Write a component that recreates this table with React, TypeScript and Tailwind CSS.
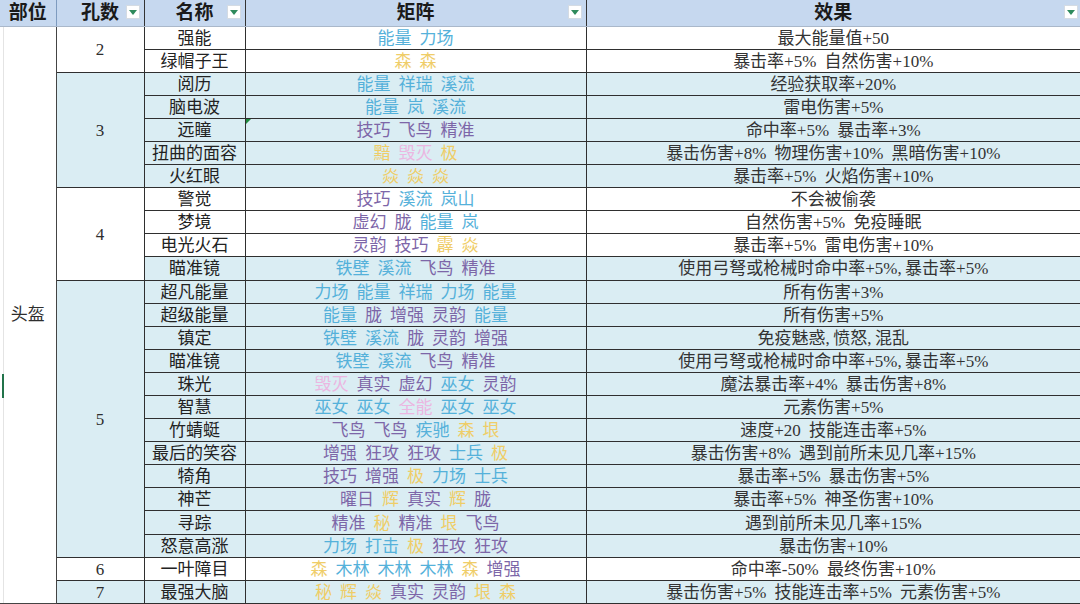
import React from "react";

const B = "text-[#55b1da]";
const P = "text-[#7d66a8]";
const Y = "text-[#efcd68]";
const K = "text-[#ebb6e1]";

const COLOR: Record<string, string> = {
  能量: B, 力场: B, 祥瑞: B, 溪流: B, 岚: B, 岚山: B, 铁壁: B, 巫女: B, 士兵: B, 打击: B, 疾驰: B, 木林: B,
  技巧: P, 飞鸟: P, 精准: P, 虚幻: P, 胧: P, 灵韵: P, 增强: P, 真实: P, 狂攻: P, 曜日: P,
  森: Y, 黯: Y, 极: Y, 焱: Y, 霹: Y, 垠: Y, 辉: Y, 秘: Y,
  毁灭: K, 全能: K,
};

type Row = { name: string; matrix: string; effect: string; blue?: boolean; mark?: boolean };
type Group = { count: string; blue: boolean; rows: Row[] };

const groups: Group[] = [
  {
    count: "2",
    blue: false,
    rows: [
      { name: "强能", matrix: "能量 力场", effect: "最大能量值+50" },
      { name: "绿帽子王", matrix: "森 森", effect: "暴击率+5% 自然伤害+10%" },
    ],
  },
  {
    count: "3",
    blue: true,
    rows: [
      { name: "阅历", matrix: "能量 祥瑞 溪流", effect: "经验获取率+20%" },
      { name: "脑电波", matrix: "能量 岚 溪流", effect: "雷电伤害+5%" },
      { name: "远瞳", matrix: "技巧 飞鸟 精准", effect: "命中率+5% 暴击率+3%", mark: true },
      { name: "扭曲的面容", matrix: "黯 毁灭 极", effect: "暴击伤害+8% 物理伤害+10% 黑暗伤害+10%" },
      { name: "火红眼", matrix: "焱 焱 焱", effect: "暴击率+5% 火焰伤害+10%" },
    ],
  },
  {
    count: "4",
    blue: false,
    rows: [
      { name: "警觉", matrix: "技巧 溪流 岚山", effect: "不会被偷袭" },
      { name: "梦境", matrix: "虚幻 胧 能量 岚", effect: "自然伤害+5% 免疫睡眠" },
      { name: "电光火石", matrix: "灵韵 技巧 霹 焱", effect: "暴击率+5% 雷电伤害+10%" },
      { name: "瞄准镜", matrix: "铁壁 溪流 飞鸟 精准", effect: "使用弓弩或枪械时命中率+5%,\u2009暴击率+5%", blue: true },
    ],
  },
  {
    count: "5",
    blue: true,
    rows: [
      { name: "超凡能量", matrix: "力场 能量 祥瑞 力场 能量", effect: "所有伤害+3%" },
      { name: "超级能量", matrix: "能量 胧 增强 灵韵 能量", effect: "所有伤害+5%" },
      { name: "镇定", matrix: "铁壁 溪流 胧 灵韵 增强", effect: "免疫魅惑,\u2009愤怒,\u2009混乱" },
      { name: "瞄准镜", matrix: "铁壁 溪流 飞鸟 精准", effect: "使用弓弩或枪械时命中率+5%,\u2009暴击率+5%" },
      { name: "珠光", matrix: "毁灭 真实 虚幻 巫女 灵韵", effect: "魔法暴击率+4% 暴击伤害+8%" },
      { name: "智慧", matrix: "巫女 巫女 全能 巫女 巫女", effect: "元素伤害+5%" },
      { name: "竹蜻蜓", matrix: "飞鸟 飞鸟 疾驰 森 垠", effect: "速度+20 技能连击率+5%" },
      { name: "最后的笑容", matrix: "增强 狂攻 狂攻 士兵 极", effect: "暴击伤害+8% 遇到前所未见几率+15%" },
      { name: "犄角", matrix: "技巧 增强 极 力场 士兵", effect: "暴击率+5% 暴击伤害+5%" },
      { name: "神芒", matrix: "曜日 辉 真实 辉 胧", effect: "暴击率+5% 神圣伤害+10%" },
      { name: "寻踪", matrix: "精准 秘 精准 垠 飞鸟", effect: "遇到前所未见几率+15%" },
      { name: "怒意高涨", matrix: "力场 打击 极 狂攻 狂攻", effect: "暴击伤害+10%" },
    ],
  },
  {
    count: "6",
    blue: false,
    rows: [{ name: "一叶障目", matrix: "森 木林 木林 木林 森 增强", effect: "命中率-50% 最终伤害+10%" }],
  },
  {
    count: "7",
    blue: true,
    rows: [{ name: "最强大脑", matrix: "秘 辉 焱 真实 灵韵 垠 森", effect: "暴击伤害+5% 技能连击率+5% 元素伤害+5%" }],
  },
];

function Filter({ edge }: { edge?: boolean }) {
  return (
    <span
      className={`absolute top-[5px] flex h-[14px] w-[14px] items-center justify-center border border-[#d4dbe3] bg-white ${
        edge ? "right-[2px]" : "right-[4px]"
      }`}
    >
      <span className="h-0 w-0 border-l-[4px] border-r-[4px] border-t-[5px] border-l-transparent border-r-transparent border-t-[#2e8a5c]" />
    </span>
  );
}

const cell = "border-b border-r border-[#2f2f2f] px-0 pt-[2px] pb-0 text-center align-middle";

export default function App() {
  const total = groups.reduce((n, g) => n + g.rows.length, 0);

  return (
    <div className="h-[604px] w-[1080px] overflow-hidden bg-white font-['Liberation_Serif','Noto_Sans_CJK_SC',serif] text-[17px] leading-[20px] text-[#2e2e2e] [word-spacing:4px]">
      <table className="w-[1080px] table-fixed border-collapse">
        <colgroup>
          <col className="w-[56px]" />
          <col className="w-[88px]" />
          <col className="w-[101px]" />
          <col className="w-[341px]" />
          <col className="w-[494px]" />
        </colgroup>
        <thead>
          <tr className="h-[26px] bg-[#c6d8ef] text-[19px] leading-[22px] font-bold text-[#1a1a1a]">
            <th className="border-b border-r border-b-[#aab8ca] border-r-[#7e9bbf] p-0 text-center">部位</th>
            <th className="relative border-b border-r border-b-[#aab8ca] border-r-[#333] p-0 text-center">
              孔数
              <Filter />
            </th>
            <th className="relative border-b border-r border-b-[#aab8ca] border-r-[#333] p-0 text-center">
              名称
              <Filter />
            </th>
            <th className="relative border-b border-r border-b-[#aab8ca] border-r-[#333] p-0 text-center">
              矩阵
              <Filter />
            </th>
            <th className="relative border-b border-b-[#aab8ca] p-0 text-center">
              效果
              <Filter edge />
            </th>
          </tr>
        </thead>
        <tbody>
          {groups.map((g, gi) =>
            g.rows.map((r, ri) => {
              const bg = g.blue || r.blue ? "bg-[#daedf3]" : "bg-white";
              return (
                <tr key={`${gi}-${ri}`} className="h-[23.1px]">
                  {gi === 0 && ri === 0 && (
                    <td rowSpan={total} className="relative border-b border-r border-[#444] bg-white p-0 text-center align-middle">
                      <span className="absolute bottom-0 left-[3px] top-0 w-px bg-[#e4e4e4]" />
                      <span className="absolute left-[2px] top-[347px] h-[24px] w-[2px] bg-[#21734a]" />
                      头盔
                    </td>
                  )}
                  {ri === 0 && (
                    <td rowSpan={g.rows.length} className={`${cell} ${g.blue ? "bg-[#daedf3]" : "bg-white"}`}>
                      {g.count}
                    </td>
                  )}
                  <td className={`${cell} ${bg} text-[#222]`}>{r.name}</td>
                  <td className={`${cell} ${bg} relative`}>
                    {r.mark && (
                      <span className="absolute left-0 top-0 h-0 w-0 border-r-[5px] border-t-[5px] border-r-transparent border-t-[#1e8a3c]" />
                    )}
                    <div className="flex justify-center gap-[8px]">
                      {r.matrix.split(" ").map((w, wi) => (
                        <span key={wi} className={COLOR[w]}>
                          {w}
                        </span>
                      ))}
                    </div>
                  </td>
                  <td className={`border-b border-[#2f2f2f] px-0 pt-[2px] pb-0 text-center align-middle ${bg} text-[#333]`}>
                    {r.effect}
                  </td>
                </tr>
              );
            })
          )}
        </tbody>
      </table>
    </div>
  );
}
